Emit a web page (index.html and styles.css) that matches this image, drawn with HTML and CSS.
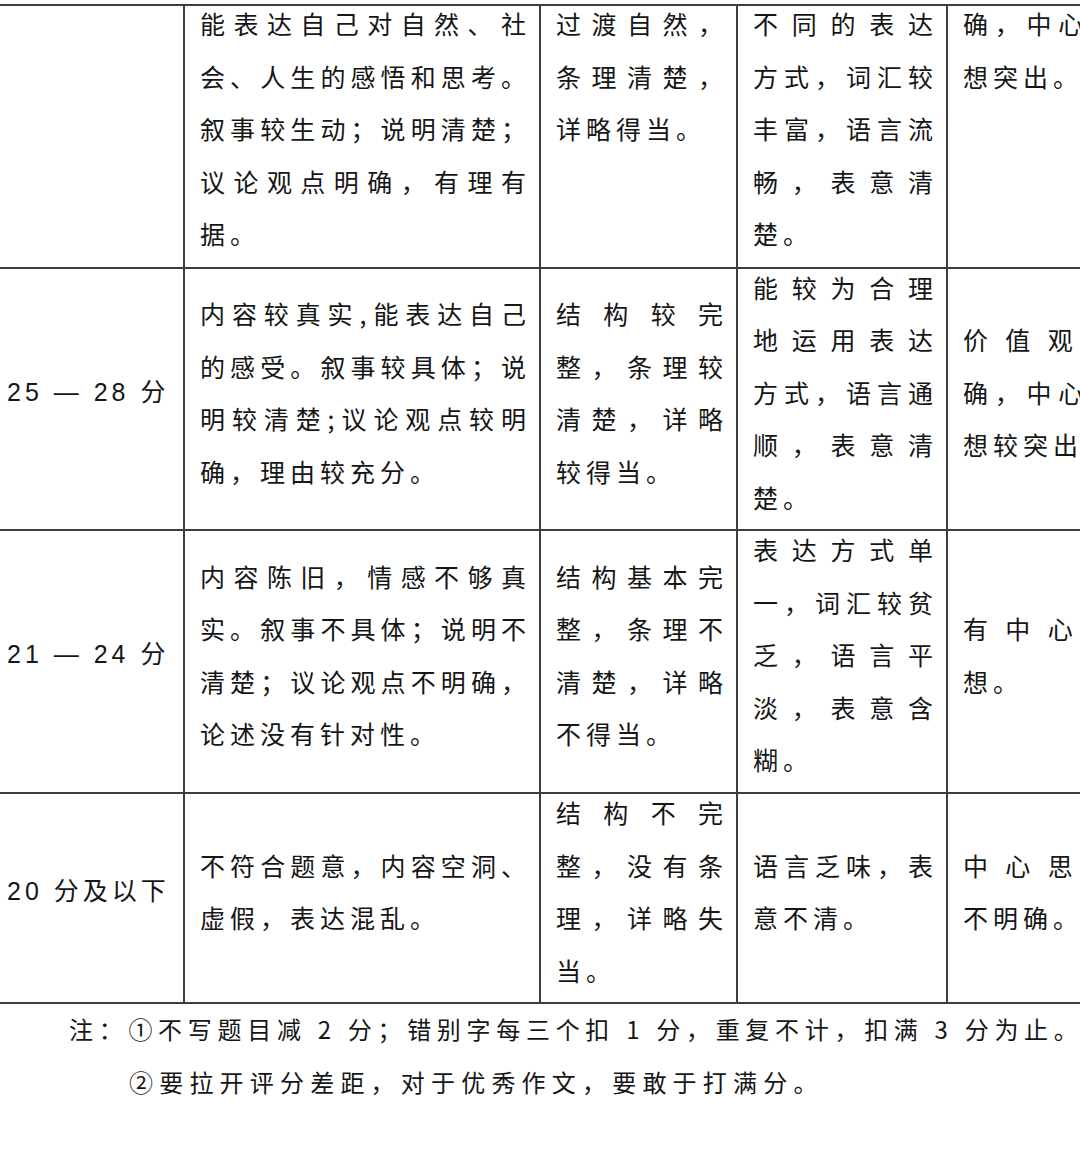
FILE: index.html
```html
<!DOCTYPE html>
<html lang="zh-CN">
<head>
<meta charset="utf-8">
<title>作文评分标准</title>
<link rel="stylesheet" href="styles.css">
</head>
<body>
<div class="page">
  <div class="rubric">
    <!-- row 1 (continued from previous page) -->
    <div class="cell score top"></div>
    <div class="cell top"><div class="lines">
      <div class="ln j">能表达自己对自然、社</div>
      <div class="ln j">会、人生的感悟和思考。</div>
      <div class="ln j">叙事较生动；说明清楚；</div>
      <div class="ln j">议论观点明确，有理有</div>
      <div class="ln">据。</div>
    </div></div>
    <div class="cell top"><div class="lines">
      <div class="ln j">过渡自然，</div>
      <div class="ln j">条理清楚，</div>
      <div class="ln">详略得当。</div>
    </div></div>
    <div class="cell top"><div class="lines">
      <div class="ln j">不同的表达</div>
      <div class="ln j">方式，词汇较</div>
      <div class="ln j">丰富，语言流</div>
      <div class="ln j">畅，表意清</div>
      <div class="ln">楚。</div>
    </div></div>
    <div class="cell top"><div class="lines">
      <div class="ln j">确，中心思</div>
      <div class="ln">想突出。</div>
    </div></div>

    <!-- row 2 -->
    <div class="cell score"><div class="lines"><div class="ln">25 — 28 分</div></div></div>
    <div class="cell"><div class="lines">
      <div class="ln j">内容较真实,能表达自己</div>
      <div class="ln j">的感受。叙事较具体；说</div>
      <div class="ln j">明较清楚;议论观点较明</div>
      <div class="ln">确，理由较充分。</div>
    </div></div>
    <div class="cell"><div class="lines">
      <div class="ln j">结构较完</div>
      <div class="ln j">整，条理较</div>
      <div class="ln j">清楚，详略</div>
      <div class="ln">较得当。</div>
    </div></div>
    <div class="cell"><div class="lines">
      <div class="ln j">能较为合理</div>
      <div class="ln j">地运用表达</div>
      <div class="ln j">方式，语言通</div>
      <div class="ln j">顺，表意清</div>
      <div class="ln">楚。</div>
    </div></div>
    <div class="cell"><div class="lines">
      <div class="ln j">价值观正</div>
      <div class="ln j">确，中心思</div>
      <div class="ln">想较突出。</div>
    </div></div>

    <!-- row 3 -->
    <div class="cell score"><div class="lines"><div class="ln">21 — 24 分</div></div></div>
    <div class="cell"><div class="lines">
      <div class="ln j">内容陈旧，情感不够真</div>
      <div class="ln j">实。叙事不具体；说明不</div>
      <div class="ln j">清楚；议论观点不明确，</div>
      <div class="ln">论述没有针对性。</div>
    </div></div>
    <div class="cell"><div class="lines">
      <div class="ln j">结构基本完</div>
      <div class="ln j">整，条理不</div>
      <div class="ln j">清楚，详略</div>
      <div class="ln">不得当。</div>
    </div></div>
    <div class="cell"><div class="lines">
      <div class="ln j">表达方式单</div>
      <div class="ln j">一，词汇较贫</div>
      <div class="ln j">乏，语言平</div>
      <div class="ln j">淡，表意含</div>
      <div class="ln">糊。</div>
    </div></div>
    <div class="cell"><div class="lines">
      <div class="ln j">有中心思</div>
      <div class="ln">想。</div>
    </div></div>

    <!-- row 4 -->
    <div class="cell score"><div class="lines"><div class="ln">20 分及以下</div></div></div>
    <div class="cell"><div class="lines">
      <div class="ln j">不符合题意，内容空洞、</div>
      <div class="ln">虚假，表达混乱。</div>
    </div></div>
    <div class="cell"><div class="lines">
      <div class="ln j">结构不完</div>
      <div class="ln j">整，没有条</div>
      <div class="ln j">理，详略失</div>
      <div class="ln">当。</div>
    </div></div>
    <div class="cell"><div class="lines">
      <div class="ln j">语言乏味，表</div>
      <div class="ln">意不清。</div>
    </div></div>
    <div class="cell"><div class="lines">
      <div class="ln j">中心思想</div>
      <div class="ln">不明确。</div>
    </div></div>
  </div>

  <div class="notes">
    <p class="note first">注：①不写题目减 2 分；错别字每三个扣 1 分，重复不计，扣满 3 分为止。</p>
    <p class="note sub">②要拉开评分差距，对于优秀作文，要敢于打满分。</p>
  </div>
</div>
</body>
</html>
```

FILE: styles.css
```css
html, body {
  margin: 0;
  padding: 0;
  background: #ffffff;
}

body {
  font-family: "Noto Sans CJK SC", "Noto Sans", sans-serif;
  color: #161616;
  overflow: hidden;
}

.page {
  width: 1080px;
  height: 1164px;
  overflow: hidden;
  padding-top: 4px;
  box-sizing: border-box;
}

.rubric {
  display: grid;
  grid-template-columns: 183px 354px 195px 208px 180px;
  grid-template-rows: 261px 260px 261px 208px;
  gap: 2px;
  padding: 2px 0;
  width: 1128px;
  background: #3d3d3d;
}

.cell {
  background: #ffffff;
  display: flex;
  flex-direction: column;
  justify-content: center;
  padding: 0 8px 14px 15px;
  min-width: 0;
  font-size: 25px;
  line-height: 52.5px;
  letter-spacing: 5px;
}

.cell.top {
  justify-content: flex-start;
  padding-bottom: 0;
}

.cell.top .lines {
  margin-top: -9px;
}

.cell.score {
  padding-left: 7px;
  padding-right: 0;
  font-family: "Liberation Sans", "Noto Sans CJK SC", sans-serif;
  letter-spacing: 4px;
}

.ln {
  text-align: left;
}

.ln.j {
  text-align: justify;
  text-align-last: justify;
}

.notes {
  margin-top: -2px;
}

.note {
  margin: 0;
  padding-left: 69px;
  font-size: 24px;
  line-height: 53px;
  letter-spacing: 6.2px;
  white-space: nowrap;
}

.note.first {
  letter-spacing: 5.7px;
}

.note.sub {
  padding-left: 129px;
}
```
